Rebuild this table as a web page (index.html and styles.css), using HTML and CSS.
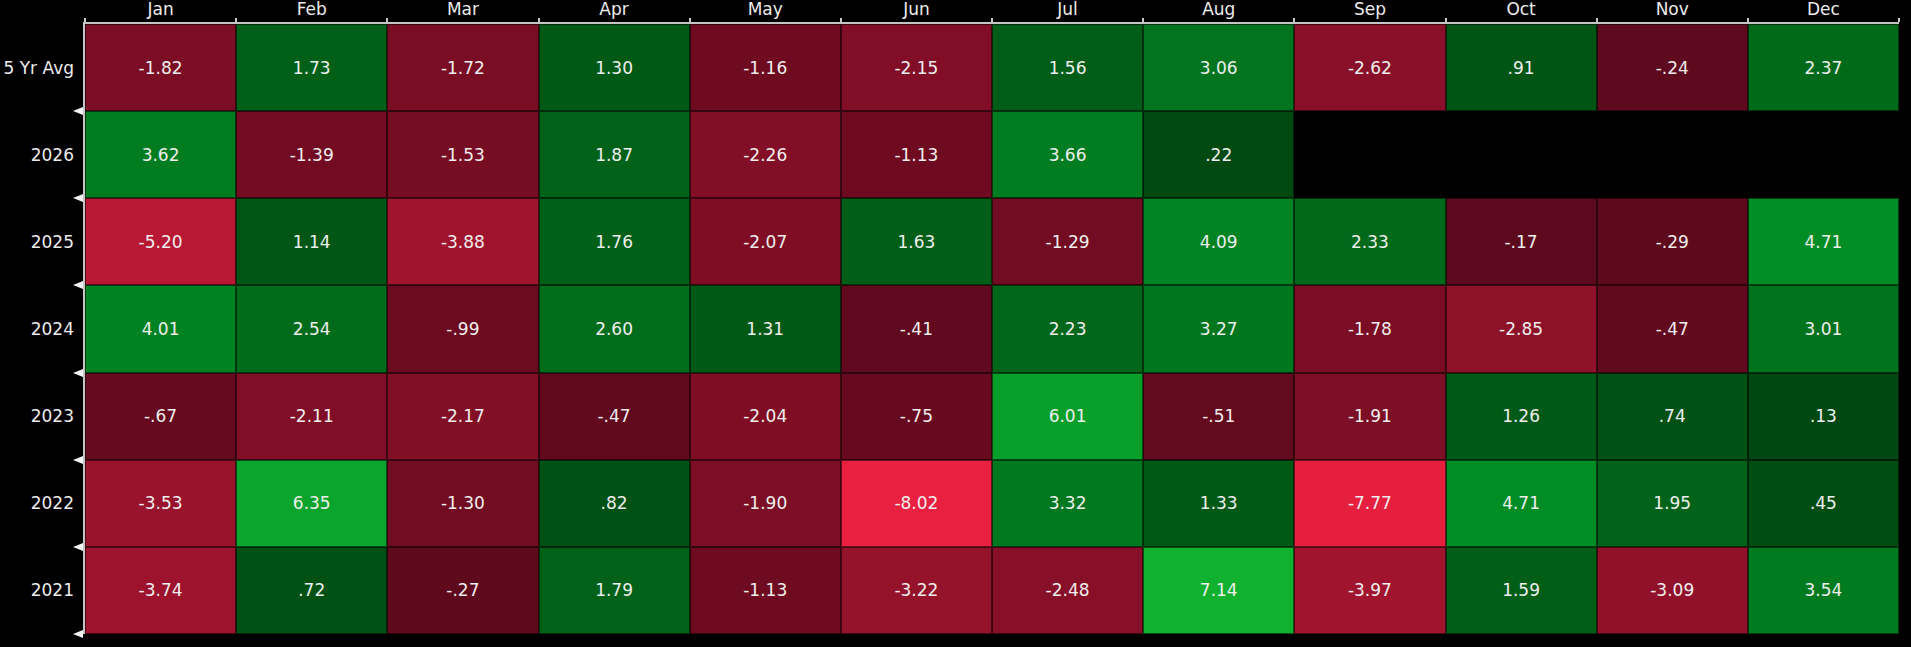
FILE: index.html
```html
<!DOCTYPE html>
<html lang="en">
<head>
<meta charset="utf-8">
<title>Monthly Returns Heatmap</title>
<link rel="stylesheet" href="styles.css">
</head>
<body>
<div class="chart">
  <div class="corner"></div>
  <div class="months">
    <div class="month">Jan</div><div class="month">Feb</div><div class="month">Mar</div><div class="month">Apr</div>
    <div class="month">May</div><div class="month">Jun</div><div class="month">Jul</div><div class="month">Aug</div>
    <div class="month">Sep</div><div class="month">Oct</div><div class="month">Nov</div><div class="month last">Dec</div>
  </div>
  <div class="labels">
    <div class="label">5 Yr Avg</div>
    <div class="label">2026</div>
    <div class="label">2025</div>
    <div class="label">2024</div>
    <div class="label">2023</div>
    <div class="label">2022</div>
    <div class="label">2021</div>
  </div>
  <div class="plot">
    <div class="cell" style="background:rgb(123,14,36)">-1.82</div>
    <div class="cell" style="background:rgb(0,96,24)">1.73</div>
    <div class="cell" style="background:rgb(121,13,36)">-1.72</div>
    <div class="cell" style="background:rgb(0,90,22)">1.30</div>
    <div class="cell" style="background:rgb(111,11,33)">-1.16</div>
    <div class="cell" style="background:rgb(129,14,38)">-2.15</div>
    <div class="cell" style="background:rgb(0,93,23)">1.56</div>
    <div class="cell" style="background:rgb(0,116,30)">3.06</div>
    <div class="cell" style="background:rgb(137,16,40)">-2.62</div>
    <div class="cell" style="background:rgb(0,84,20)">.91</div>
    <div class="cell" style="background:rgb(94,9,29)">-.24</div>
    <div class="cell" style="background:rgb(0,106,27)">2.37</div>

    <div class="cell" style="background:rgb(0,124,32)">3.62</div>
    <div class="cell" style="background:rgb(115,12,34)">-1.39</div>
    <div class="cell" style="background:rgb(118,13,35)">-1.53</div>
    <div class="cell" style="background:rgb(0,98,24)">1.87</div>
    <div class="cell" style="background:rgb(131,15,38)">-2.26</div>
    <div class="cell" style="background:rgb(110,11,33)">-1.13</div>
    <div class="cell" style="background:rgb(0,125,32)">3.66</div>
    <div class="cell" style="background:rgb(0,73,17)">.22</div>
    <div class="cell empty"></div>
    <div class="cell empty"></div>
    <div class="cell empty"></div>
    <div class="cell empty"></div>

    <div class="cell" style="background:rgb(184,24,51)">-5.20</div>
    <div class="cell" style="background:rgb(0,87,21)">1.14</div>
    <div class="cell" style="background:rgb(160,20,45)">-3.88</div>
    <div class="cell" style="background:rgb(0,96,24)">1.76</div>
    <div class="cell" style="background:rgb(127,14,37)">-2.07</div>
    <div class="cell" style="background:rgb(0,94,23)">1.63</div>
    <div class="cell" style="background:rgb(113,12,34)">-1.29</div>
    <div class="cell" style="background:rgb(0,131,34)">4.09</div>
    <div class="cell" style="background:rgb(0,105,26)">2.33</div>
    <div class="cell" style="background:rgb(93,9,29)">-.17</div>
    <div class="cell" style="background:rgb(95,9,29)">-.29</div>
    <div class="cell" style="background:rgb(0,141,37)">4.71</div>

    <div class="cell" style="background:rgb(0,130,34)">4.01</div>
    <div class="cell" style="background:rgb(0,108,27)">2.54</div>
    <div class="cell" style="background:rgb(108,11,32)">-.99</div>
    <div class="cell" style="background:rgb(0,109,28)">2.60</div>
    <div class="cell" style="background:rgb(0,90,22)">1.31</div>
    <div class="cell" style="background:rgb(97,9,30)">-.41</div>
    <div class="cell" style="background:rgb(0,103,26)">2.23</div>
    <div class="cell" style="background:rgb(0,119,31)">3.27</div>
    <div class="cell" style="background:rgb(122,13,36)">-1.78</div>
    <div class="cell" style="background:rgb(141,17,41)">-2.85</div>
    <div class="cell" style="background:rgb(98,9,30)">-.47</div>
    <div class="cell" style="background:rgb(0,115,30)">3.01</div>

    <div class="cell" style="background:rgb(102,10,31)">-.67</div>
    <div class="cell" style="background:rgb(128,14,38)">-2.11</div>
    <div class="cell" style="background:rgb(129,15,38)">-2.17</div>
    <div class="cell" style="background:rgb(98,9,30)">-.47</div>
    <div class="cell" style="background:rgb(127,14,37)">-2.04</div>
    <div class="cell" style="background:rgb(103,10,31)">-.75</div>
    <div class="cell" style="background:rgb(8,160,43)">6.01</div>
    <div class="cell" style="background:rgb(99,10,30)">-.51</div>
    <div class="cell" style="background:rgb(124,14,37)">-1.91</div>
    <div class="cell" style="background:rgb(0,89,22)">1.26</div>
    <div class="cell" style="background:rgb(0,81,19)">.74</div>
    <div class="cell" style="background:rgb(0,72,17)">.13</div>

    <div class="cell" style="background:rgb(154,19,44)">-3.53</div>
    <div class="cell" style="background:rgb(11,165,45)">6.35</div>
    <div class="cell" style="background:rgb(113,12,34)">-1.30</div>
    <div class="cell" style="background:rgb(0,82,20)">.82</div>
    <div class="cell" style="background:rgb(124,14,37)">-1.90</div>
    <div class="cell" style="background:rgb(234,32,64)">-8.02</div>
    <div class="cell" style="background:rgb(0,120,31)">3.32</div>
    <div class="cell" style="background:rgb(0,90,22)">1.33</div>
    <div class="cell" style="background:rgb(230,31,63)">-7.77</div>
    <div class="cell" style="background:rgb(0,141,37)">4.71</div>
    <div class="cell" style="background:rgb(0,99,25)">1.95</div>
    <div class="cell" style="background:rgb(0,77,18)">.45</div>

    <div class="cell" style="background:rgb(157,19,45)">-3.74</div>
    <div class="cell" style="background:rgb(0,81,19)">.72</div>
    <div class="cell" style="background:rgb(95,9,29)">-.27</div>
    <div class="cell" style="background:rgb(0,97,24)">1.79</div>
    <div class="cell" style="background:rgb(110,11,33)">-1.13</div>
    <div class="cell" style="background:rgb(148,18,42)">-3.22</div>
    <div class="cell" style="background:rgb(135,15,39)">-2.48</div>
    <div class="cell" style="background:rgb(17,177,48)">7.14</div>
    <div class="cell" style="background:rgb(161,20,46)">-3.97</div>
    <div class="cell" style="background:rgb(0,94,23)">1.59</div>
    <div class="cell" style="background:rgb(146,17,42)">-3.09</div>
    <div class="cell" style="background:rgb(0,123,32)">3.54</div>
  </div>
</div>
</body>
</html>
```

FILE: styles.css
```css
html, body {
  margin: 0;
  padding: 0;
  background: #000;
}

body {
  width: 1911px;
  height: 647px;
  overflow: hidden;
  font-family: "DejaVu Sans", "Liberation Sans", sans-serif;
  font-size: 17px;
  color: #eeeeee;
}

.chart {
  display: grid;
  grid-template-columns: 83px 1816px;
  grid-template-rows: 22px 612px;
  width: 1899px;
}

.months {
  display: grid;
  grid-template-columns: repeat(12, 1fr);
  padding-left: 2px;
}

.month {
  position: relative;
  text-align: center;
  line-height: 19px;
  color: #ececec;
}

.month::before {
  content: "";
  position: absolute;
  left: -1px;
  bottom: 0;
  width: 2px;
  height: 4px;
  background: #c8c8c8;
}

.month.last::after {
  content: "";
  position: absolute;
  right: -1px;
  bottom: 0;
  width: 2px;
  height: 4px;
  background: #c8c8c8;
}

.labels {
  display: grid;
  grid-template-rows: repeat(7, 1fr);
  padding-top: 2px;
}

.label {
  position: relative;
  display: flex;
  align-items: center;
  justify-content: flex-end;
  padding-right: 9px;
  color: #ececec;
}

.label::after {
  content: "";
  position: absolute;
  right: 0;
  bottom: -4px;
  width: 0;
  height: 0;
  border-top: 4px solid transparent;
  border-bottom: 4px solid transparent;
  border-right: 10px solid #f2f2f2;
}

.plot {
  display: grid;
  grid-template-columns: repeat(12, 1fr);
  grid-template-rows: repeat(7, 1fr);
  border-top: 2px solid #c4c4c4;
  border-left: 2px solid #c4c4c4;
}

.cell {
  display: flex;
  align-items: center;
  justify-content: center;
  border: 1px solid rgba(0, 0, 0, 0.55);
  color: #f0eeee;
}

.cell.empty {
  background: #000;
  border-color: #000;
}
```
